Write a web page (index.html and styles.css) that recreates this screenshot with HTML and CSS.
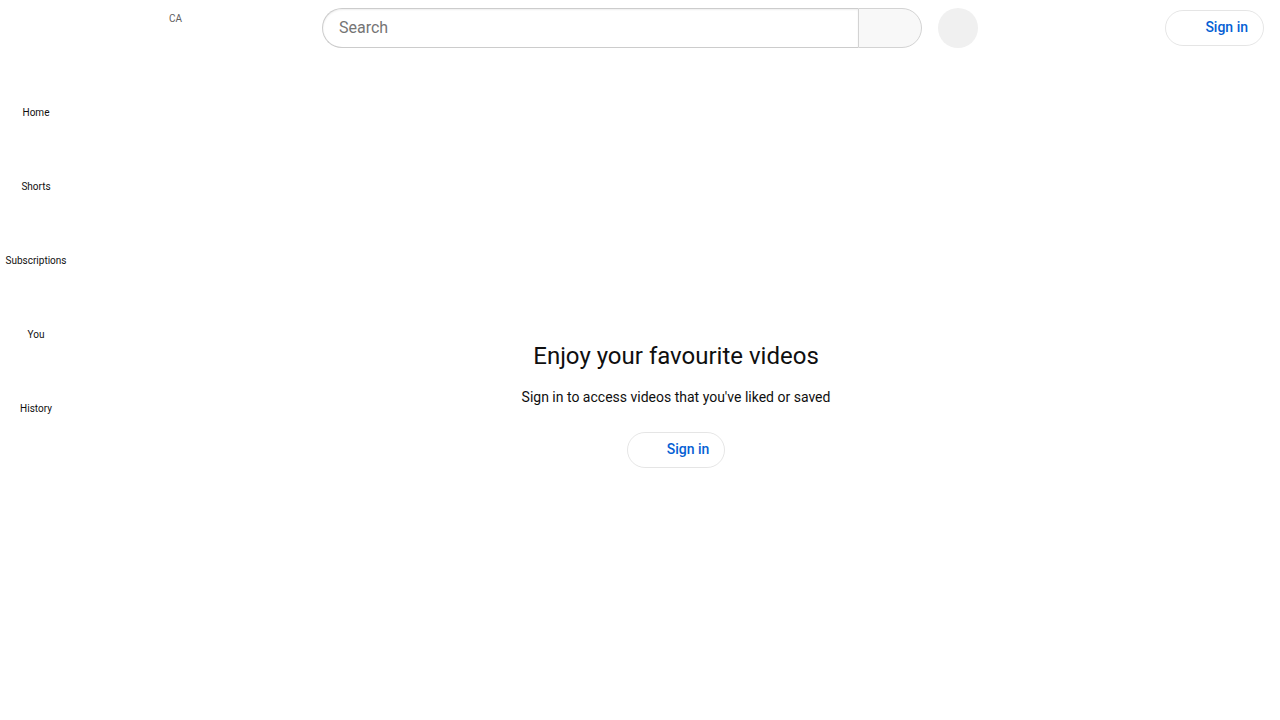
FILE: index.html
```html
<!DOCTYPE html>
<html lang="en">
<head>
<meta charset="utf-8">
<title>YouTube</title>
<link rel="stylesheet" href="styles.css">
</head>
<body>
<header class="masthead">
  <div class="start">
    <span class="country">CA</span>
  </div>
  <div class="center">
    <form class="search">
      <div class="search-box"><input class="search-input" type="text" placeholder="Search"></div>
      <button class="search-btn" type="button"></button>
    </form>
    <button class="mic-btn" type="button"></button>
  </div>
  <div class="spacer"></div>
  <div class="end">
    <a class="signin-btn" href="#"><span class="signin-icon"></span><span class="signin-text">Sign in</span></a>
  </div>
</header>
<div class="page">
  <nav class="mini-guide">
    <a class="guide-item" href="#"><span class="guide-icon"></span><span class="guide-label">Home</span></a>
    <a class="guide-item" href="#"><span class="guide-icon"></span><span class="guide-label">Shorts</span></a>
    <a class="guide-item" href="#"><span class="guide-icon"></span><span class="guide-label">Subscriptions</span></a>
    <a class="guide-item" href="#"><span class="guide-icon"></span><span class="guide-label">You</span></a>
    <a class="guide-item" href="#"><span class="guide-icon"></span><span class="guide-label">History</span></a>
  </nav>
  <main class="content">
    <h1 class="title">Enjoy your favourite videos</h1>
    <p class="subtitle">Sign in to access videos that you've liked or saved</p>
    <a class="signin-btn main-signin" href="#"><span class="signin-icon"></span><span class="signin-text">Sign in</span></a>
  </main>
</div>
</body>
</html>
```
FILE: styles.css
```css
* { box-sizing: border-box; }
html, body { margin: 0; padding: 0; background: #ffffff; }
body {
  font-family: Roboto, "Liberation Sans", Arial, sans-serif;
  color: #0f0f0f;
  width: 1280px;
  height: 720px;
  overflow: hidden;
}
a { text-decoration: none; color: inherit; }

.masthead {
  height: 56px;
  display: flex;
  align-items: center;
  padding: 0 16px;
}
.start {
  width: 306px;
  height: 56px;
  display: flex;
  align-items: flex-start;
}
.country {
  margin-left: 153px;
  margin-top: 13px;
  font-size: 10px;
  line-height: 12px;
  color: #606060;
}
.center {
  display: flex;
  align-items: center;
}
.search {
  display: flex;
  height: 40px;
  margin: 0;
}
.search-box {
  width: 536px;
  height: 40px;
  border: 1px solid #cccccc;
  border-right: none;
  border-radius: 40px 0 0 40px;
  padding: 0 4px 2px 16px;
  display: flex;
  align-items: center;
  box-shadow: inset 0 1px 2px #eeeeee;
}
.search-input {
  border: none;
  outline: none;
  width: 100%;
  font-family: Roboto, "Liberation Sans", Arial, sans-serif;
  font-size: 16px;
  color: #0f0f0f;
  padding: 0;
  background: transparent;
}
.search-input::placeholder { color: #757575; }
.search-btn {
  width: 64px;
  height: 40px;
  border: 1px solid #d3d3d3;
  background: #f8f8f8;
  border-radius: 0 40px 40px 0;
  padding: 0;
}
.mic-btn {
  width: 40px;
  height: 40px;
  margin-left: 16px;
  border: none;
  border-radius: 50%;
  background: #f0f0f0;
  padding: 0;
}
.spacer { flex: 1; }
.end { display: flex; align-items: center; }

.signin-btn {
  display: flex;
  align-items: center;
  height: 36px;
  padding: 0 15px 2px 9px;
  border: 1px solid rgba(0, 0, 0, 0.1);
  border-radius: 18px;
  color: #065fd4;
  font-size: 14px;
  font-weight: 500;
}
.signin-icon {
  width: 24px;
  height: 24px;
  margin-right: 6px;
}
.signin-text { line-height: 32px; }

.page { display: flex; }
.mini-guide {
  width: 72px;
  padding: 4px 4px 0;
  display: flex;
  flex-direction: column;
}
.guide-item {
  display: flex;
  flex-direction: column;
  align-items: center;
  width: 64px;
  padding: 16px 0 14px;
}
.guide-icon {
  width: 24px;
  height: 24px;
  margin-bottom: 6px;
}
.guide-label {
  font-size: 10px;
  line-height: 14px;
  color: #0f0f0f;
  white-space: nowrap;
}

.content {
  flex: 1;
  display: flex;
  flex-direction: column;
  align-items: center;
  padding-top: 284px;
}
.title {
  margin: 0;
  font-size: 24px;
  line-height: 32px;
  font-weight: 400;
}
.subtitle {
  margin: 15px 0 0;
  font-size: 14px;
  line-height: 20px;
}
.main-signin {
  margin-top: 25px;
}
```
